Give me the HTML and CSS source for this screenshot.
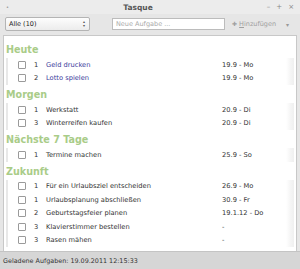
FILE: index.html
```html
<!DOCTYPE html>
<html lang="de">
<head>
    <meta charset="UTF-8">
    <title>Tasque</title>
    <link rel="stylesheet" href="styles.css">
</head>
<body>
    <div class="window">
        <div class="titlebar">
            <span class="menu-dot">&#8226;</span>
            <span class="title">Tasque</span>
            <span class="win-buttons">
                <span>&ndash;</span>
                <span>+</span>
                <span>&times;</span>
            </span>
        </div>

        <div class="toolbar">
            <div class="combo">
                <span>Alle (10)</span>
                <span class="combo-arrows"><span>&#9652;</span><span>&#9662;</span></span>
            </div>
            <div class="entry">Neue Aufgabe ...</div>
            <div class="add-button"><span class="plus">&#10010;</span> <u>H</u>inzufügen</div>
            <div class="menu-arrow">&#9662;</div>
        </div>

        <div class="task-list">
            <div class="group-title">Heute</div>
            <div class="group">
                <div class="task today"><span class="check"></span><span class="prio">1</span><span class="name">Geld drucken</span><span class="due">19.9 - Mo</span></div>
                <div class="task today"><span class="check"></span><span class="prio">2</span><span class="name">Lotto spielen</span><span class="due">19.9 - Mo</span></div>
            </div>

            <div class="group-title">Morgen</div>
            <div class="group">
                <div class="task"><span class="check"></span><span class="prio">1</span><span class="name">Werkstatt</span><span class="due">20.9 - Di</span></div>
                <div class="task"><span class="check"></span><span class="prio">3</span><span class="name">Winterreifen kaufen</span><span class="due">20.9 - Di</span></div>
            </div>

            <div class="group-title">Nächste 7 Tage</div>
            <div class="group">
                <div class="task"><span class="check"></span><span class="prio">1</span><span class="name">Termine machen</span><span class="due">25.9 - So</span></div>
            </div>

            <div class="group-title">Zukunft</div>
            <div class="group">
                <div class="task"><span class="check"></span><span class="prio">1</span><span class="name">Für ein Urlaubsziel entscheiden</span><span class="due">26.9 - Mo</span></div>
                <div class="task"><span class="check"></span><span class="prio">1</span><span class="name">Urlaubsplanung abschließen</span><span class="due">30.9 - Fr</span></div>
                <div class="task"><span class="check"></span><span class="prio">2</span><span class="name">Geburtstagsfeier planen</span><span class="due">19.1.12 - Do</span></div>
                <div class="task"><span class="check"></span><span class="prio">3</span><span class="name">Klavierstimmer bestellen</span><span class="due">-</span></div>
                <div class="task"><span class="check"></span><span class="prio">3</span><span class="name">Rasen mähen</span><span class="due">-</span></div>
            </div>
        </div>

        <div class="statusbar">Geladene Aufgaben: 19.09.2011 12:15:33</div>
    </div>
</body>
</html>
```

FILE: styles.css
```css
body {
    margin: 0;
    font-family: "DejaVu Sans", sans-serif;
    background: #dcdcdc;
}
.window {
    width: 300px;
    height: 269px;
    display: flex;
    flex-direction: column;
    background: #e6e6e6;
    overflow: hidden;
}
.titlebar {
    height: 14px;
    display: flex;
    align-items: center;
    position: relative;
    background: #ececec;
    color: #444;
}
.menu-dot {
    font-size: 5px;
    color: #888;
    margin-left: 6px;
}
.title {
    position: absolute;
    left: 0;
    right: 24px;
    text-align: center;
    font-size: 7.5px;
    font-weight: bold;
    color: #555;
}
.win-buttons {
    margin-left: auto;
    margin-right: 6px;
    display: flex;
    gap: 6px;
    font-size: 7px;
    color: #888;
}
.toolbar {
    height: 20px;
    display: flex;
    align-items: center;
    padding: 0 5px;
    font-size: 6.5px;
    background: #e6e6e6;
}
.combo {
    width: 85px;
    height: 14px;
    box-sizing: border-box;
    display: flex;
    align-items: center;
    justify-content: space-between;
    padding: 0 4px 0 3px;
    border: 1px solid #b4b4b4;
    border-radius: 2px;
    background: linear-gradient(#fdfdfd, #ececec);
    color: #222;
}
.combo-arrows {
    display: flex;
    flex-direction: column;
    font-size: 4px;
    line-height: 4px;
    color: #555;
}
.entry {
    width: 113px;
    height: 12px;
    box-sizing: border-box;
    margin-left: 22px;
    padding: 0 3px;
    display: flex;
    align-items: center;
    border: 1px solid #bcbcbc;
    background: #fff;
    color: #aaa;
}
.add-button {
    margin-left: 7px;
    color: #a0a0a0;
}
.plus {
    font-size: 6px;
}
.menu-arrow {
    margin-left: auto;
    margin-right: 6px;
    color: #999;
    font-size: 6px;
}
.task-list {
    flex: 1;
    margin: 1px 3px 0;
    padding-top: 4px;
    background: #fff;
    border: 1px solid #c8c8c8;
    border-bottom: none;
}
.group-title {
    height: 18px;
    line-height: 20px;
    padding-left: 2px;
    font-size: 9.6px;
    font-weight: bold;
    color: #a9cc88;
}
.group {
    margin: 0 2px 0 2px;
    border-left: 2px solid #e8e8e8;
    background: linear-gradient(to right, #fff 0, #fff 278px, #f4f4f4 283px, #ededed 288px);
}
.task {
    height: 13.5px;
    display: flex;
    align-items: center;
    font-size: 6.7px;
    color: #333;
}
.task.today .name {
    color: #3c3c9c;
}
.check {
    width: 8px;
    height: 8px;
    box-sizing: border-box;
    margin-left: 10px;
    border: 1px solid #9a9a9a;
    border-radius: 1px;
    background: #fff;
}
.prio {
    margin-left: 8px;
    width: 12px;
}
.name {
    flex: 1;
}
.due {
    width: 72px;
}
.statusbar {
    height: 17px;
    display: flex;
    align-items: center;
    padding-left: 3px;
    font-size: 6.4px;
    color: #333;
    background: #d6d6d6;
    border-top: 1px solid #c4c4c4;
}
```
